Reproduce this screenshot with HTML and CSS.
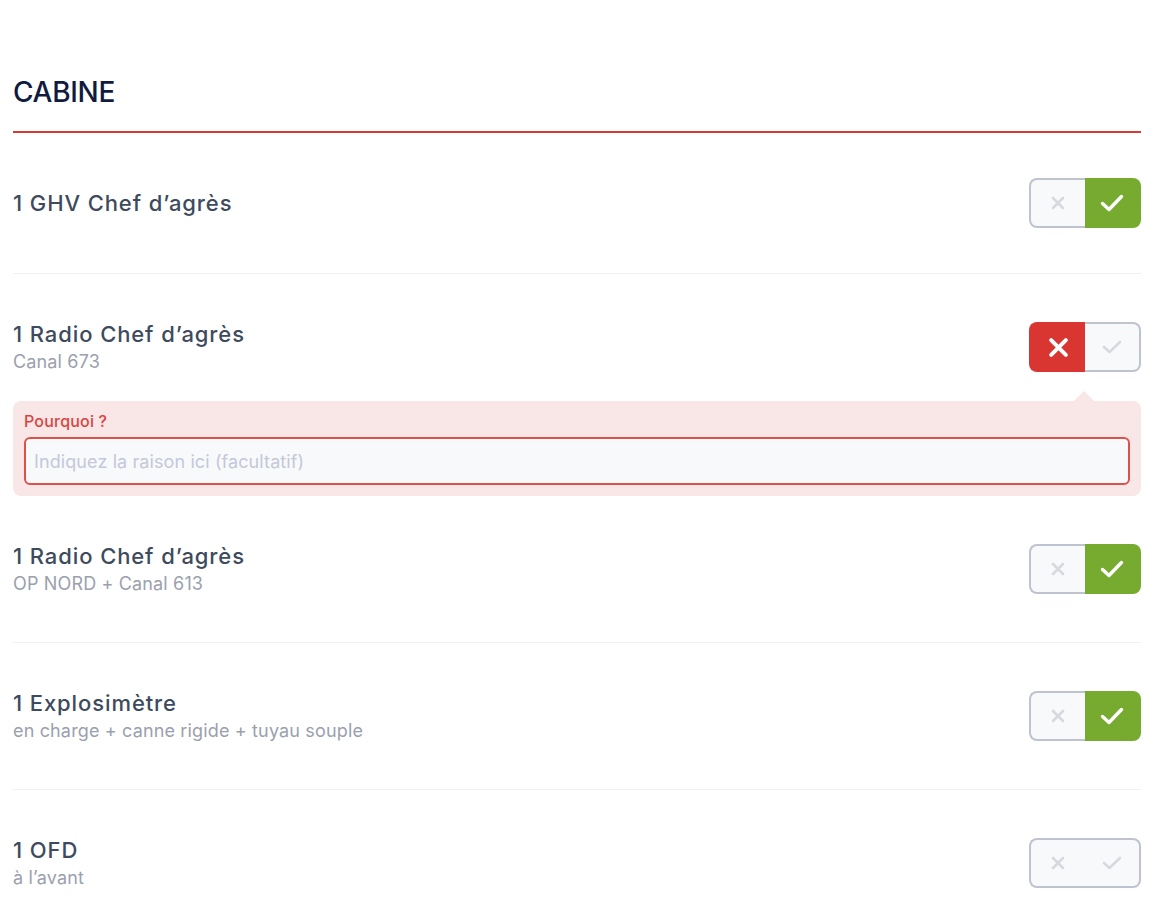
FILE: index.html
```html
<!DOCTYPE html>
<html lang="fr">
<head>
<meta charset="utf-8">
<title>Cabine</title>
<link rel="stylesheet" href="styles.css">
</head>
<body>
<main class="section">
  <h2 class="section-title">CABINE</h2>

  <div class="item">
    <div class="item-main">
      <div class="item-text">
        <div class="item-name">1 GHV Chef d’agrès</div>
      </div>
      <div class="toggle">
        <button class="tg tg-no"><svg class="ic-x-off" viewBox="0 0 14 14"><path d="M2 2L12 12M12 2L2 12"/></svg></button>
        <button class="tg tg-yes is-on"><svg class="ic-ok-on" viewBox="0 0 24 18"><path d="M2.5 9.5L9 15.5L21.5 2.5"/></svg></button>
      </div>
    </div>
  </div>

  <div class="item item-open">
    <div class="item-main">
      <div class="item-text">
        <div class="item-name">1 Radio Chef d’agrès</div>
        <div class="item-sub">Canal 673</div>
      </div>
      <div class="toggle">
        <button class="tg tg-no is-on"><svg class="ic-x-on" viewBox="0 0 20 20"><path d="M3 3L17 17M17 3L3 17"/></svg></button>
        <button class="tg tg-yes"><svg class="ic-ok-off" viewBox="0 0 20 14"><path d="M2 7L7.5 12L18 2"/></svg></button>
      </div>
    </div>
    <div class="reason">
      <label class="reason-label">Pourquoi ?</label>
      <input class="reason-input" type="text" placeholder="Indiquez la raison ici (facultatif)">
    </div>
  </div>

  <div class="item">
    <div class="item-main">
      <div class="item-text">
        <div class="item-name">1 Radio Chef d’agrès</div>
        <div class="item-sub">OP NORD + Canal 613</div>
      </div>
      <div class="toggle">
        <button class="tg tg-no"><svg class="ic-x-off" viewBox="0 0 14 14"><path d="M2 2L12 12M12 2L2 12"/></svg></button>
        <button class="tg tg-yes is-on"><svg class="ic-ok-on" viewBox="0 0 24 18"><path d="M2.5 9.5L9 15.5L21.5 2.5"/></svg></button>
      </div>
    </div>
  </div>

  <div class="item">
    <div class="item-main">
      <div class="item-text">
        <div class="item-name">1 Explosimètre</div>
        <div class="item-sub">en charge + canne rigide + tuyau souple</div>
      </div>
      <div class="toggle">
        <button class="tg tg-no"><svg class="ic-x-off" viewBox="0 0 14 14"><path d="M2 2L12 12M12 2L2 12"/></svg></button>
        <button class="tg tg-yes is-on"><svg class="ic-ok-on" viewBox="0 0 24 18"><path d="M2.5 9.5L9 15.5L21.5 2.5"/></svg></button>
      </div>
    </div>
  </div>

  <div class="item">
    <div class="item-main">
      <div class="item-text">
        <div class="item-name">1 OFD</div>
        <div class="item-sub">à l’avant</div>
      </div>
      <div class="toggle">
        <button class="tg tg-no"><svg class="ic-x-off" viewBox="0 0 14 14"><path d="M2 2L12 12M12 2L2 12"/></svg></button>
        <button class="tg tg-yes"><svg class="ic-ok-off" viewBox="0 0 20 14"><path d="M2 7L7.5 12L18 2"/></svg></button>
      </div>
    </div>
  </div>
</main>
</body>
</html>
```

FILE: styles.css
```css
* { box-sizing: border-box; }

html, body {
  margin: 0;
  padding: 0;
  background: #ffffff;
  font-family: Inter, "Noto Sans", "Liberation Sans", sans-serif;
}

.section {
  width: 1128px;
  margin-left: 13px;
  padding-top: 74px;
}

.section-title {
  margin: 0;
  font-size: 28px;
  line-height: 36px;
  font-weight: 500;
  color: #111b3f;
  padding-bottom: 21px;
  border-bottom: 2px solid #d63a35;
  letter-spacing: -0.3px;
}

.item {
  padding: 45px 0;
  border-bottom: 1px solid #f0f0f2;
}

.item-open {
  padding-bottom: 0;
  border-bottom: none;
}

.item-main {
  display: flex;
  align-items: center;
  justify-content: space-between;
}

.item-name {
  font-size: 22px;
  line-height: 30px;
  font-weight: 500;
  color: #3e4a5d;
  letter-spacing: 0.9px;
}

.item-sub {
  font-size: 18px;
  line-height: 26px;
  color: #9ba0ae;
  letter-spacing: 0.15px;
}

.toggle {
  display: flex;
  width: 112px;
  height: 50px;
}

.tg {
  width: 56px;
  height: 50px;
  margin: 0;
  padding: 0;
  display: flex;
  align-items: center;
  justify-content: center;
  background: #f8f9fb;
  border: 2px solid #bfc3cf;
  cursor: pointer;
}

.tg-no {
  border-right: none;
  border-radius: 8px 0 0 8px;
}

.tg-yes {
  border-left: none;
  border-radius: 0 8px 8px 0;
}

.tg-no.is-on {
  background: #d93632;
  border-color: #d93632;
}

.tg-yes.is-on {
  background: #77ab30;
  border-color: #77ab30;
}

.tg svg path {
  fill: none;
  stroke-linecap: round;
  stroke-linejoin: round;
}

.ic-x-off { width: 14px; height: 14px; }
.ic-x-off path { stroke: #d7d9df; stroke-width: 2.6; }

.ic-ok-off { width: 20px; height: 14px; }
.ic-ok-off path { stroke: #d7d9df; stroke-width: 2.6; }

.ic-ok-on { width: 24px; height: 18px; }
.ic-ok-on path { stroke: #ffffff; stroke-width: 3.4; }

.ic-x-on { width: 21px; height: 21px; }
.ic-x-on path { stroke: #ffffff; stroke-width: 3.8; }

.reason {
  position: relative;
  margin-top: 26px;
  background: #f9e6e6;
  border-radius: 8px;
  padding: 10px 11px 11px;
}

.reason::before {
  content: "";
  position: absolute;
  top: -10px;
  right: 47px;
  width: 0;
  height: 0;
  border-left: 10px solid transparent;
  border-right: 10px solid transparent;
  border-bottom: 10px solid #f9e6e6;
}

.reason-label {
  display: block;
  font-size: 16px;
  line-height: 20px;
  font-weight: 500;
  color: #d9443f;
  letter-spacing: 0.2px;
  margin-bottom: 6px;
}

.reason-input {
  display: block;
  width: 100%;
  height: 48px;
  border: 2px solid #e0504b;
  border-radius: 6px;
  background: #f8f9fb;
  padding: 0 8px;
  font-family: inherit;
  font-size: 18px;
  letter-spacing: 0.1px;
  color: #3e4a5d;
  outline: none;
}

.reason-input::placeholder {
  color: #c4c8d9;
}
```
